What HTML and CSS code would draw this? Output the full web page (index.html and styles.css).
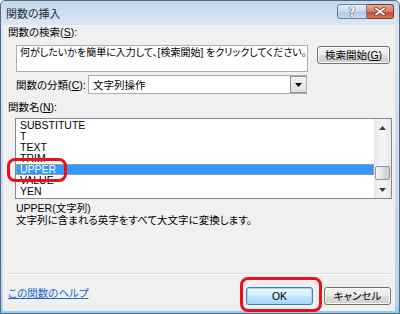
FILE: index.html
```html
<!DOCTYPE html>
<html lang="ja">
<head>
<meta charset="utf-8">
<title>関数の挿入</title>
<link rel="stylesheet" href="styles.css">
</head>
<body>
<div class="window">
  <div class="titlebar">
    <span class="title">関数の挿入</span>
    <div class="caption-btns">
      <span class="cbtn help">?</span>
      <span class="cbtn close">
        <svg width="12" height="9" viewBox="0 0 12 9"><path d="M2 1.5 L10 7.5 M10 1.5 L2 7.5" stroke="#7a3326" stroke-width="3.4" stroke-linecap="round"/><path d="M2 1.5 L10 7.5 M10 1.5 L2 7.5" stroke="#fff" stroke-width="1.8" stroke-linecap="round"/></svg>
      </span>
    </div>
  </div>
  <div class="client">
    <div class="label">関数の検索(<u>S</u>):</div>
    <div class="search-row">
      <div class="search-box">何がしたいかを簡単に入力して、[検索開始] をクリックしてください。</div>
      <button class="btn search-btn">検索開始(<u>G</u>)</button>
    </div>
    <div class="cat-row">
      <span class="cat-label">関数の分類(<u>C</u>):</span>
      <div class="select">
        <span class="select-text">文字列操作</span>
        <span class="drop"><svg width="7" height="4" viewBox="0 0 7 4"><polygon points="0,0 7,0 3.5,4" fill="#000"/></svg></span>
      </div>
    </div>
    <div class="label name-label">関数名(<u>N</u>):</div>
    <div class="listbox">
      <ul class="items">
        <li>SUBSTITUTE</li>
        <li>T</li>
        <li>TEXT</li>
        <li>TRIM</li>
        <li class="selected">UPPER</li>
        <li>VALUE</li>
        <li>YEN</li>
      </ul>
      <div class="vscroll">
        <span class="sbtn"><svg width="7" height="4" viewBox="0 0 7 4"><polygon points="0,4 7,4 3.5,0" fill="#3b3b3b"/></svg></span>
        <div class="track"><span class="thumb"></span></div>
        <span class="sbtn"><svg width="7" height="4" viewBox="0 0 7 4"><polygon points="0,0 7,0 3.5,4" fill="#3b3b3b"/></svg></span>
      </div>
    </div>
    <div class="desc">
      <div>UPPER(文字列)</div>
      <div class="desc-text">文字列に含まれる英字をすべて大文字に変換します。</div>
    </div>
    <div class="sep"></div>
    <div class="footer">
      <a class="help-link" href="#">この関数のヘルプ</a>
      <div class="btns">
        <button class="btn default">OK</button>
        <button class="btn">キャンセル</button>
      </div>
    </div>
  </div>
  <div class="mark mark-upper"></div>
  <div class="mark mark-ok"></div>
</div>
</body>
</html>
```
FILE: styles.css
```css
* { box-sizing: border-box; }
html, body { margin: 0; padding: 0; }
body {
  width: 400px;
  height: 314px;
  overflow: hidden;
  font-family: "Liberation Sans", "Noto Sans CJK JP", sans-serif;
  font-size: 10.5px;
  font-feature-settings: "palt";
  color: #000;
  background: #fff;
  white-space: nowrap;
}
u { text-decoration: underline; }

.window {
  position: relative;
  width: 400px;
  height: 314px;
  border: 1px solid #55687f;
  border-radius: 5px 5px 0 0;
  background: linear-gradient(to bottom, #c6d8ec 0, #d8e5f3 22px, #c6d9ed 200px, #b8d4ee 300px, #8fd0f2 310px);
  padding: 0 4px 2px 2px;
  display: flex;
  flex-direction: column;
}

.titlebar {
  height: 24px;
  display: flex;
  align-items: flex-start;
}
.title {
  padding-left: 3px;
  line-height: 24px;
  padding-top: 1px;
  font-size: 11px;
  color: #1e2a3a;
}
.caption-btns {
  margin-left: auto;
  margin-top: 3px;
  margin-right: 1px;
  display: flex;
}
.cbtn {
  height: 15px;
  display: flex;
  align-items: center;
  justify-content: center;
  border: 1px solid #6b7f98;
}
.help {
  width: 30px;
  border-radius: 3px 0 0 3px;
  background: linear-gradient(to bottom, #e6eef8 0, #c9d9ec 50%, #b3c9e3 51%, #c6dbf0 100%);
  color: #fff;
  font-weight: bold;
  font-size: 12px;
  text-shadow: 0 0 1px #33475f, 0 0 1px #33475f, 0 0 1px #33475f;
  font-family: "DejaVu Sans", sans-serif;
}
.close {
  width: 27px;
  border-left: none;
  border-color: #7a3b30;
  border-radius: 0 3px 3px 0;
  background: linear-gradient(to bottom, #e9a999 0, #d87c66 50%, #c6452c 51%, #d8734f 100%);
}

.client {
  flex: 1;
  background: #f0f0f0;
  padding: 0 4px 6px 5px;
  display: flex;
  flex-direction: column;
}

.label { line-height: 14px; }

.search-row {
  margin-top: 6px;
  padding-left: 8px;
  display: flex;
  align-items: flex-start;
}
.search-box {
  width: 292px;
  height: 27px;
  border: 1px solid #abadb3;
  background: #fff;
  padding: 1px 3px;
  line-height: 12px;
  font-size: 10px;
  overflow: hidden;
}
.btn {
  font-family: inherit;
  font-size: 10.5px;
  font-feature-settings: "palt";
  color: #000;
  height: 18px;
  padding: 0;
  white-space: nowrap;
  border: 1px solid #707070;
  border-radius: 3px;
  background: linear-gradient(to bottom, #f2f2f2 0, #ebebeb 50%, #dddddd 51%, #cfcfcf 100%);
  box-shadow: inset 0 0 0 1px #fcfcfc;
  line-height: 14px;
}
.search-btn {
  margin-left: 9px;
  margin-top: 1px;
  width: 73px;
}

.cat-row {
  margin-top: 3px;
  padding-left: 8px;
  display: flex;
  align-items: center;
}
.cat-label { width: 72px; line-height: 14px; }
.select {
  width: 219px;
  height: 19px;
  border: 1px solid #abadb3;
  background: #fff;
  display: flex;
  align-items: center;
}
.select-text { padding-left: 4px; flex: 1; }
.drop {
  width: 16px;
  height: 17px;
  border: 1px solid #8c8c8c;
  border-right: none;
  background: linear-gradient(to bottom, #f4f4f4, #e0e0e0);
  display: flex;
  align-items: center;
  justify-content: center;
}

.name-label { margin-top: 6px; }

.listbox {
  margin-top: 4px;
  margin-left: 7px;
  width: 377px;
  height: 81px;
  flex: none;
  align-self: flex-start;
  border: 1px solid #828790;
  background: #fff;
  display: flex;
}
.items {
  list-style: none;
  margin: 0;
  padding: 1px 0;
  flex: 1;
}
.items li {
  height: 11px;
  line-height: 11px;
  padding-left: 4px;
  overflow: hidden;
}
.items li.selected {
  background: #3399ff;
  color: #fff;
  outline: 1px dotted #f0a040;
  outline-offset: -1px;
}
.vscroll {
  width: 17px;
  display: flex;
  flex-direction: column;
  background: linear-gradient(to right, #e6e6e6, #f4f4f4 40%, #f4f4f4 60%, #e6e6e6);
}
.sbtn {
  height: 17px;
  display: flex;
  align-items: center;
  justify-content: center;
}
.track {
  flex: 1;
  display: flex;
  flex-direction: column;
  justify-content: flex-end;
  padding: 0 1px 1px 1px;
}
.thumb {
  height: 14px;
  border: 1px solid #979797;
  border-radius: 2px;
  background: linear-gradient(to right, #f4f4f4, #e4e4e4 50%, #d8d8d8 51%, #cfcfcf);
}

.desc {
  margin-top: 3px;
  padding-left: 8px;
  line-height: 12px;
}

.sep {
  margin-top: auto;
  border-top: 1px solid #dcdfe3;
  border-bottom: 1px solid #fafafa;
}

.footer {
  padding-top: 12px;
  display: flex;
  align-items: flex-start;
}
.help-link {
  color: #1a66cc;
  text-decoration: underline;
  line-height: 14px;
  margin-top: -1px;
}
.btns {
  margin-left: auto;
  display: flex;
  gap: 11px;
}
.btns .btn { width: 67px; }
.btn.default {
  border-color: #3c7fb1;
  box-shadow: inset 0 0 0 1px #a9d6f5;
  background: linear-gradient(to bottom, #eaf6fd 0, #d9f0fc 50%, #bee6fd 51%, #a7d9f5 100%);
}

.mark {
  position: absolute;
  border: 3px solid #e8101c;
  border-radius: 8px;
}
.mark-upper { left: 6px; top: 157px; width: 60px; height: 24px; }
.mark-ok { left: 239px; top: 276px; width: 82px; height: 35px; }
```
